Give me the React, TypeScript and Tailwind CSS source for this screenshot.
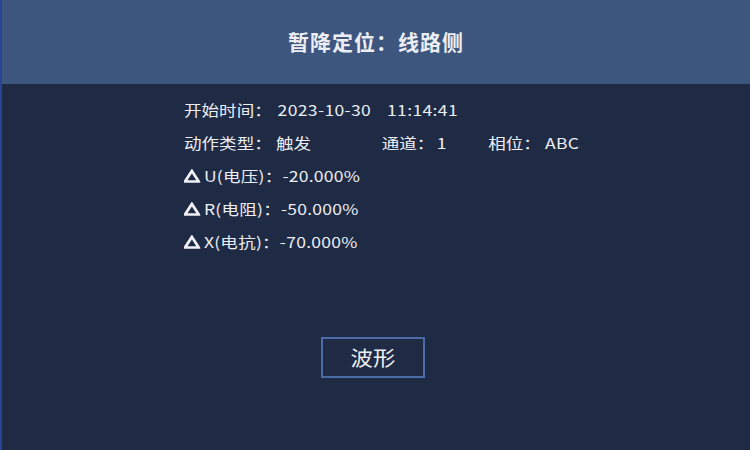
const font = { fontFamily: '"Noto Sans CJK SC", "Noto Sans", sans-serif' }

function Delta() {
  return (
    <svg viewBox="0 0 14 14" className="mr-[3.5px] h-[14px] w-[13.5px]">
      <path d="M7 1.8 L13 12.6 H1 Z" fill="none" stroke="#eef0f5" strokeWidth="2.6" strokeLinejoin="miter" />
    </svg>
  )
}

export default function App() {
  return (
    <div
      className="flex h-[450px] w-[750px] flex-col overflow-hidden border-l-2 border-[#2a4394] bg-[#1f2a44] text-[#eceef3]"
      style={font}
    >
      <div className="flex h-[84px] shrink-0 items-center justify-center bg-[#3d567e]">
        <h1 className="text-[21px] font-bold tracking-[1px]">暂降定位：线路侧</h1>
      </div>

      <div className="pl-[182px] pt-[9px]">
        <div className="flex origin-left scale-x-[1.17] flex-col text-[15px] leading-[33px]">
          <div className="flex">
            <span className="w-[80px]">开始时间：</span>
            <span className="w-[93.5px] tracking-[0.3px]">2023-10-30</span>
            <span className="tracking-[0.3px]">11:14:41</span>
          </div>
          <div className="flex">
            <span className="w-[78.6px]">动作类型：</span>
            <span className="w-[90.4px]">触发</span>
            <span className="w-[47px]">通道：</span>
            <span className="w-[44px]">1</span>
            <span className="w-[48.5px]">相位：</span>
            <span className="tracking-[0.3px]">ABC</span>
          </div>
          <div className="flex items-center">
            <Delta />
            <span className="tracking-[0.2px]">U(电压)：-20.000%</span>
          </div>
          <div className="flex items-center">
            <Delta />
            <span className="tracking-[0.2px]">R(电阻)：-50.000%</span>
          </div>
          <div className="flex items-center">
            <Delta />
            <span className="tracking-[0.2px]">X(电抗)：-70.000%</span>
          </div>
        </div>
      </div>

      <div className="mt-[79px] flex pl-[319px]">
        <button
          type="button"
          className="flex h-[41px] w-[104px] items-center justify-center border-2 border-[#4a6aa8] text-[20px]"
        >
          <span className="scale-x-[1.12]">波形</span>
        </button>
      </div>
    </div>
  )
}
